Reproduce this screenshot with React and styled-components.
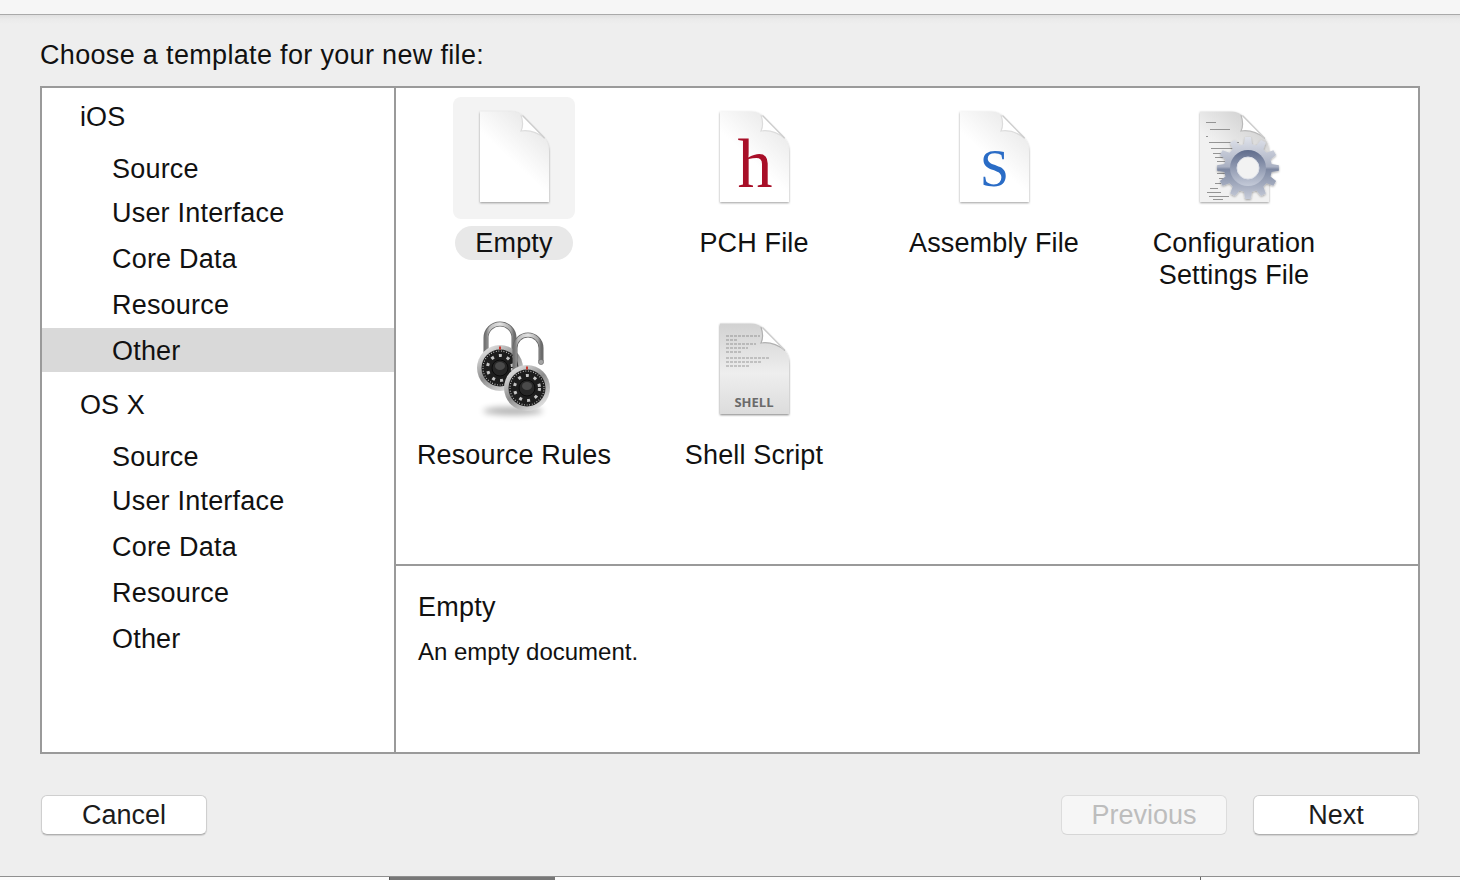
import styled, { createGlobalStyle } from "styled-components";

const GlobalStyle = createGlobalStyle`
    html, body {
        margin: 0;
        padding: 0;
        background: #f6f6f6;
    }
    body {
        font-family: "Liberation Sans", Arial, sans-serif;
        color: #111;
    }
`

const Root = styled.div`
    display: flex;
    flex-direction: column;
    width: 1460px;
    height: 880px;
    overflow: hidden;
`
const TopStrip = styled.div`
    flex: none;
    height: 14px;
    background: #f6f6f6;
    border-bottom: 1px solid #a9a9a9;
`
const Dialog = styled.div`
    flex: none;
    display: flex;
    flex-direction: column;
    box-sizing: border-box;
    height: 861px;
    padding: 0 40px;
    background: linear-gradient(#e0e0e0 0, #eaeaea 4px, #eeeeee 9px);
`
const Heading = styled.div`
    height: 71px;
    padding-top: 24px;
    box-sizing: border-box;
    font-size: 27px;
    line-height: 32px;
    letter-spacing: 0.33px;
`
const Panel = styled.div`
    display: flex;
    box-sizing: border-box;
    width: 1380px;
    height: 668px;
    background: #fff;
    border: 2px solid #9a9a9a;
`
const Sidebar = styled.div`
    flex: none;
    box-sizing: border-box;
    width: 354px;
    border-right: 2px solid #9a9a9a;
`
const GroupLabel = styled.div`
    box-sizing: border-box;
    height: ${props => props.$height}px;
    padding: ${props => props.$top}px 0 0 38px;
    font-size: 27px;
    line-height: 36px;
    letter-spacing: 0.1px;
`
const SidebarItem = styled.div`
    display: flex;
    align-items: center;
    box-sizing: border-box;
    height: ${props => props.$height}px;
    padding: 2px 0 0 70px;
    font-size: 27px;
    letter-spacing: 0.2px;
    background: ${props => (props.$selected ? "#d9d9d9" : "transparent")};
`
const Main = styled.div`
    flex: 1;
    display: flex;
    flex-direction: column;
`
const TemplateGrid = styled.div`
    display: grid;
    grid-template-columns: repeat(4, 236px);
    grid-auto-rows: 212px;
    column-gap: 4px;
    box-sizing: border-box;
    height: 478px;
    padding-top: 9px;
    border-bottom: 2px solid #9a9a9a;
`
const Cell = styled.div`
    display: flex;
    flex-direction: column;
    align-items: center;
`
const Tile = styled.div`
    width: 122px;
    height: 122px;
    border-radius: 8px;
    background: ${props => (props.$selected ? "#f3f3f3" : "transparent")};
`
const IconSvg = styled.svg`
    display: block;
`
const CellLabel = styled.div`
    box-sizing: border-box;
    margin-top: 7px;
    padding: 1px 20px 0;
    min-height: 34px;
    border-radius: 17px;
    font-size: 27px;
    line-height: 32px;
    letter-spacing: 0.15px;
    text-align: center;
    white-space: pre-line;
    background: ${props => (props.$selected ? "#e8e8e8" : "transparent")};
`
const Details = styled.div`
    padding: 24px 22px 0;
`
const DetailTitle = styled.div`
    font-size: 27px;
    line-height: 34px;
    letter-spacing: 0.25px;
`
const DetailText = styled.div`
    margin-top: 11px;
    font-size: 24px;
    line-height: 34px;
`
const Footer = styled.div`
    display: flex;
    align-items: center;
    justify-content: space-between;
    height: 40px;
    margin-top: 41px;
    padding: 0 1px;
`
const ButtonGroup = styled.div`
    display: flex;
    gap: 26px;
`
const Button = styled.div`
    display: flex;
    align-items: center;
    justify-content: center;
    box-sizing: border-box;
    width: ${props => props.$width}px;
    height: 40px;
    border-radius: 6px;
    font-size: 27px;
    color: ${props => (props.$disabled ? "#bdbdbd" : "#1c1c1c")};
    background: ${props => (props.$disabled ? "#f6f6f6" : "#fff")};
    border: 1px solid ${props => (props.$disabled ? "#dcdcdc" : "#cfcfcf")};
    border-bottom-color: ${props => (props.$disabled ? "#d6d6d6" : "#b0b0b0")};
    box-shadow: ${props => (props.$disabled ? "none" : "0 1px 1px rgba(0, 0, 0, 0.12)")};
`
const BottomStrip = styled.div`
    flex: none;
    display: flex;
    height: 4px;
    background: #fbfbfb;
    border-top: 1px solid #8f8f8f;
`
const StripGap = styled.div`
    flex: none;
    width: ${props => props.$width}px;
`
const StripTab = styled.div`
    flex: none;
    width: 165px;
    border-left: 1px solid #555;
    background: #777;
`
const StripLine = styled.div`
    flex: none;
    width: 1px;
    background: #666;
`
const GlyphText = styled.text`
    font-family: ${props => props.$family};
    font-size: ${props => props.$size}px;
    font-weight: ${props => props.$weight || 400};
    fill: ${props => props.$color};
`

const PAGE_PATH = "M27 14.5H58C63 14.5 67 16 70.5 19.5L90 39.5C94 43.5 96 48 96 54V105H27Z"

function Page({ id, from, to }) {
    return (
        <>
            <defs>
                <linearGradient id={id} x1="0.75" y1="0" x2="0.4" y2="0.5">
                    <stop offset="0" stopColor={from} />
                    <stop offset="1" stopColor={to} />
                </linearGradient>
                <filter id={`${id}-s`} x="-20%" y="-20%" width="140%" height="140%">
                    <feDropShadow dx="0" dy="1" stdDeviation="0.9" floodColor="#000" floodOpacity="0.38" />
                </filter>
            </defs>
            <path d={PAGE_PATH} fill={`url(#${id})`} filter={`url(#${id}-s)`} />
        </>
    )
}

function Fold({ edge = "#dcdcdc" }) {
    return (
        <>
            <path d="M68 18C70 24 70 30 68 34C75 33 84 35 92 41.5Z" fill="#fff" />
            <path d="M68 18C70 24 70 30 68 34C75 33 84 35 92 41.5" fill="none" stroke={edge} strokeWidth="1.2" />
            <path d="M69.5 18.5L91.5 41" fill="none" stroke="#cccccc" strokeWidth="1.2" />
        </>
    )
}

function Icon({ children }) {
    return (
        <IconSvg width="122" height="122" viewBox="0 0 122 122">
            {children}
        </IconSvg>
    )
}

function EmptyIcon() {
    return (
        <Icon>
            <Page id="page-empty" from="#e6e6e6" to="#ffffff" />
            <Fold />
        </Icon>
    )
}

function LetterIcon({ letter, size, x, y, color, id }) {
    return (
        <Icon>
            <Page id={id} from="#e8e8e8" to="#ffffff" />
            <Fold />
            <GlyphText x={x} y={y} textAnchor="middle" $family='"Liberation Serif", serif' $size={size} $color={color}>
                {letter}
            </GlyphText>
        </Icon>
    )
}

const CODE_LINES = [
    [33, 25, 10], [37, 32, 20], [33, 39, 2], [36, 45, 30], [38, 51, 22], [40, 56, 16],
    [42, 60, 14], [44, 64, 8], [46, 70, 6], [44, 76, 10], [46, 81, 5], [42, 86, 6],
    [37, 91, 8], [34, 95, 14], [36, 99, 20], [40, 102, 10],
]

// gear outline is easier to compute than to write by hand
function gearPoints(cx, cy, teeth, outer, root) {
    const step = (Math.PI * 2) / teeth
    const points = []
    for (let i = 0; i < teeth; i++) {
        const a = i * step - Math.PI / 2
        const corners = [
            [root, a - step * 0.32],
            [outer, a - step * 0.17],
            [outer, a + step * 0.17],
            [root, a + step * 0.32],
        ]
        corners.forEach(([r, t]) => {
            points.push(`${(cx + r * Math.cos(t)).toFixed(1)},${(cy + r * Math.sin(t)).toFixed(1)}`)
        })
    }
    return points.join(" ")
}

function ConfigIcon() {
    return (
        <Icon>
            <defs>
                <linearGradient id="gear-fill" x1="0" y1="0" x2="0" y2="1">
                    <stop offset="0" stopColor="#dfe2ea" />
                    <stop offset="0.48" stopColor="#a9b0c2" />
                    <stop offset="0.52" stopColor="#7d88a2" />
                    <stop offset="1" stopColor="#c6cbd8" />
                </linearGradient>
                <linearGradient id="gear-ring" x1="0" y1="0" x2="0" y2="1">
                    <stop offset="0" stopColor="#5f6c8c" />
                    <stop offset="1" stopColor="#c4cad8" />
                </linearGradient>
                <filter id="gear-soft" x="-20%" y="-20%" width="140%" height="140%">
                    <feDropShadow dx="0" dy="1" stdDeviation="1" floodColor="#000" floodOpacity="0.35" />
                </filter>
                <filter id="code-blur">
                    <feGaussianBlur stdDeviation="0.35" />
                </filter>
            </defs>
            <Page id="page-config" from="#cfcfcf" to="#f1f1f1" />
            <Fold edge="#b9b9b9" />
            <g filter="url(#code-blur)">
                {CODE_LINES.map(([x, y, w]) => (
                    <rect key={`${x}-${y}`} x={x} y={y} width={w} height="0.9" fill="#8b8b8b" />
                ))}
            </g>
            <polygon points={gearPoints(75, 71, 12, 31, 24)} fill="url(#gear-fill)" filter="url(#gear-soft)" />
            <circle cx="75" cy="71" r="18" fill="url(#gear-ring)" />
            <circle cx="75" cy="71" r="11" fill="#f2f2f2" stroke="#dfe2ea" strokeWidth="1" />
        </Icon>
    )
}

function Padlock({ cx, cy, r, id }) {
    return (
        <>
            <defs>
                <linearGradient id={id} x1="0.1" y1="0" x2="0.8" y2="1">
                    <stop offset="0" stopColor="#f4f4f4" />
                    <stop offset="0.5" stopColor="#8c8c8c" />
                    <stop offset="1" stopColor="#ececec" />
                </linearGradient>
            </defs>
            <circle cx={cx} cy={cy} r={r} fill={`url(#${id})`} />
            <circle cx={cx} cy={cy} r={r - 4.5} fill="#1d1d1d" />
            <circle cx={cx} cy={cy} r={r - 6} fill="none" stroke="#cfcfcf" strokeWidth="1.2" strokeDasharray="0.8 1.8" />
            <circle cx={cx} cy={cy} r={r - 10.5} fill="none" stroke="#c4c4c4" strokeWidth="3" strokeDasharray="3 5.2" />
            <circle cx={cx} cy={cy} r={r - 15} fill="#262626" stroke="#0c0c0c" strokeWidth="1" />
            <ellipse cx={cx} cy={cy - 2} rx={r - 18} ry={r - 19} fill="#4a4a4a" />
            <rect x={cx - 1} y={cy - r + 1.5} width="2" height="3" fill="#c8352b" />
        </>
    )
}

function LocksIcon() {
    return (
        <Icon>
            <defs>
                <linearGradient id="shackle" x1="0" y1="0" x2="1" y2="0">
                    <stop offset="0" stopColor="#777" />
                    <stop offset="0.12" stopColor="#bdbdbd" />
                    <stop offset="0.5" stopColor="#e4e4e4" />
                    <stop offset="0.88" stopColor="#a8a8a8" />
                    <stop offset="1" stopColor="#6c6c6c" />
                </linearGradient>
                <filter id="lock-blur" x="-30%" y="-200%" width="160%" height="500%">
                    <feGaussianBlur stdDeviation="3" />
                </filter>
            </defs>
            <ellipse cx="60" cy="102" rx="30" ry="4" fill="#000" opacity="0.3" filter="url(#lock-blur)" />
            <path d="M33 48V29A14 14 0 0 1 61 29V48" fill="none" stroke="#666" strokeWidth="5" />
            <path d="M33 48V29A14 14 0 0 1 61 29V48" fill="none" stroke="url(#shackle)" strokeWidth="3.4" />
            <Padlock cx={47} cy={59} r={23} id="lock-back" />
            <path d="M62 64V39A13 13 0 0 1 88 39V52" fill="none" stroke="#666" strokeWidth="5" />
            <path d="M62 64V39A13 13 0 0 1 88 39V52" fill="none" stroke="url(#shackle)" strokeWidth="3.4" />
            <circle cx="88" cy="53" r="2.6" fill="#a5a5a5" stroke="#666" strokeWidth="0.6" />
            <Padlock cx={74} cy={79} r={23} id="lock-front" />
        </Icon>
    )
}

const SHELL_LINES = [
    [33, 27, 34], [33, 31, 12], [33, 35, 30], [33, 39, 22], [33, 43, 16], [33, 49, 44], [33, 53, 36], [33, 57, 24],
]

function ShellIcon() {
    return (
        <Icon>
            <defs>
                <linearGradient id="shell-page" x1="0" y1="0" x2="0" y2="1">
                    <stop offset="0" stopColor="#d2d2d2" />
                    <stop offset="0.55" stopColor="#eeeeee" />
                    <stop offset="1" stopColor="#dcdcdc" />
                </linearGradient>
                <filter id="shell-s" x="-20%" y="-20%" width="140%" height="140%">
                    <feDropShadow dx="0" dy="1" stdDeviation="1" floodColor="#000" floodOpacity="0.5" />
                </filter>
                <filter id="shell-blur">
                    <feGaussianBlur stdDeviation="0.35" />
                </filter>
            </defs>
            <path d={PAGE_PATH} fill="url(#shell-page)" filter="url(#shell-s)" />
            <Fold edge="#b0b0b0" />
            <g filter="url(#shell-blur)" opacity="0.75">
                {SHELL_LINES.map(([x, y, w]) => (
                    <line key={y} x1={x} y1={y} x2={x + w} y2={y} stroke="#666" strokeWidth="0.8" strokeDasharray="3 1" />
                ))}
            </g>
            <GlyphText x="61" y="98" textAnchor="middle" $family='"Open Sans", sans-serif' $size={13} $weight={700} $color="#6a6a6a">
                SHELL
            </GlyphText>
        </Icon>
    )
}

const templates = [
    { name: "Empty", icon: <EmptyIcon />, selected: true },
    {
        name: "PCH File",
        icon: <LetterIcon id="page-h" letter="h" size={70} x={62} y={90} color="#a80f28" />,
    },
    {
        name: "Assembly File",
        icon: <LetterIcon id="page-s" letter="S" size={52} x={61.5} y={89} color="#2a6cc6" />,
    },
    { name: "Configuration\nSettings File", icon: <ConfigIcon /> },
    { name: "Resource Rules", icon: <LocksIcon /> },
    { name: "Shell Script", icon: <ShellIcon /> },
]

const sidebarGroups = [
    {
        name: "iOS",
        height: 59,
        top: 11,
        items: [["Source", 42], ["User Interface", 46], ["Core Data", 46], ["Resource", 47], ["Other", 44, true]],
    },
    {
        name: "OS X",
        height: 63,
        top: 15,
        items: [["Source", 42], ["User Interface", 46], ["Core Data", 46], ["Resource", 46], ["Other", 46]],
    },
]

export default function App() {
    return (
        <Root>
            <GlobalStyle />
            <TopStrip />
            <Dialog>
                <Heading>Choose a template for your new file:</Heading>
                <Panel>
                    <Sidebar>
                        {sidebarGroups.map((group) => (
                            <div key={group.name}>
                                <GroupLabel $height={group.height} $top={group.top}>{group.name}</GroupLabel>
                                {group.items.map(([label, height, selected]) => (
                                    <SidebarItem key={label} $height={height} $selected={selected}>
                                        {label}
                                    </SidebarItem>
                                ))}
                            </div>
                        ))}
                    </Sidebar>
                    <Main>
                        <TemplateGrid>
                            {templates.map((template) => (
                                <Cell key={template.name}>
                                    <Tile $selected={template.selected}>{template.icon}</Tile>
                                    <CellLabel $selected={template.selected}>{template.name}</CellLabel>
                                </Cell>
                            ))}
                        </TemplateGrid>
                        <Details>
                            <DetailTitle>Empty</DetailTitle>
                            <DetailText>An empty document.</DetailText>
                        </Details>
                    </Main>
                </Panel>
                <Footer>
                    <Button $width={166}>Cancel</Button>
                    <ButtonGroup>
                        <Button $width={166} $disabled>Previous</Button>
                        <Button $width={166}>Next</Button>
                    </ButtonGroup>
                </Footer>
            </Dialog>
            <BottomStrip>
                <StripGap $width={389} />
                <StripTab />
                <StripGap $width={645} />
                <StripLine />
            </BottomStrip>
        </Root>
    )
}
